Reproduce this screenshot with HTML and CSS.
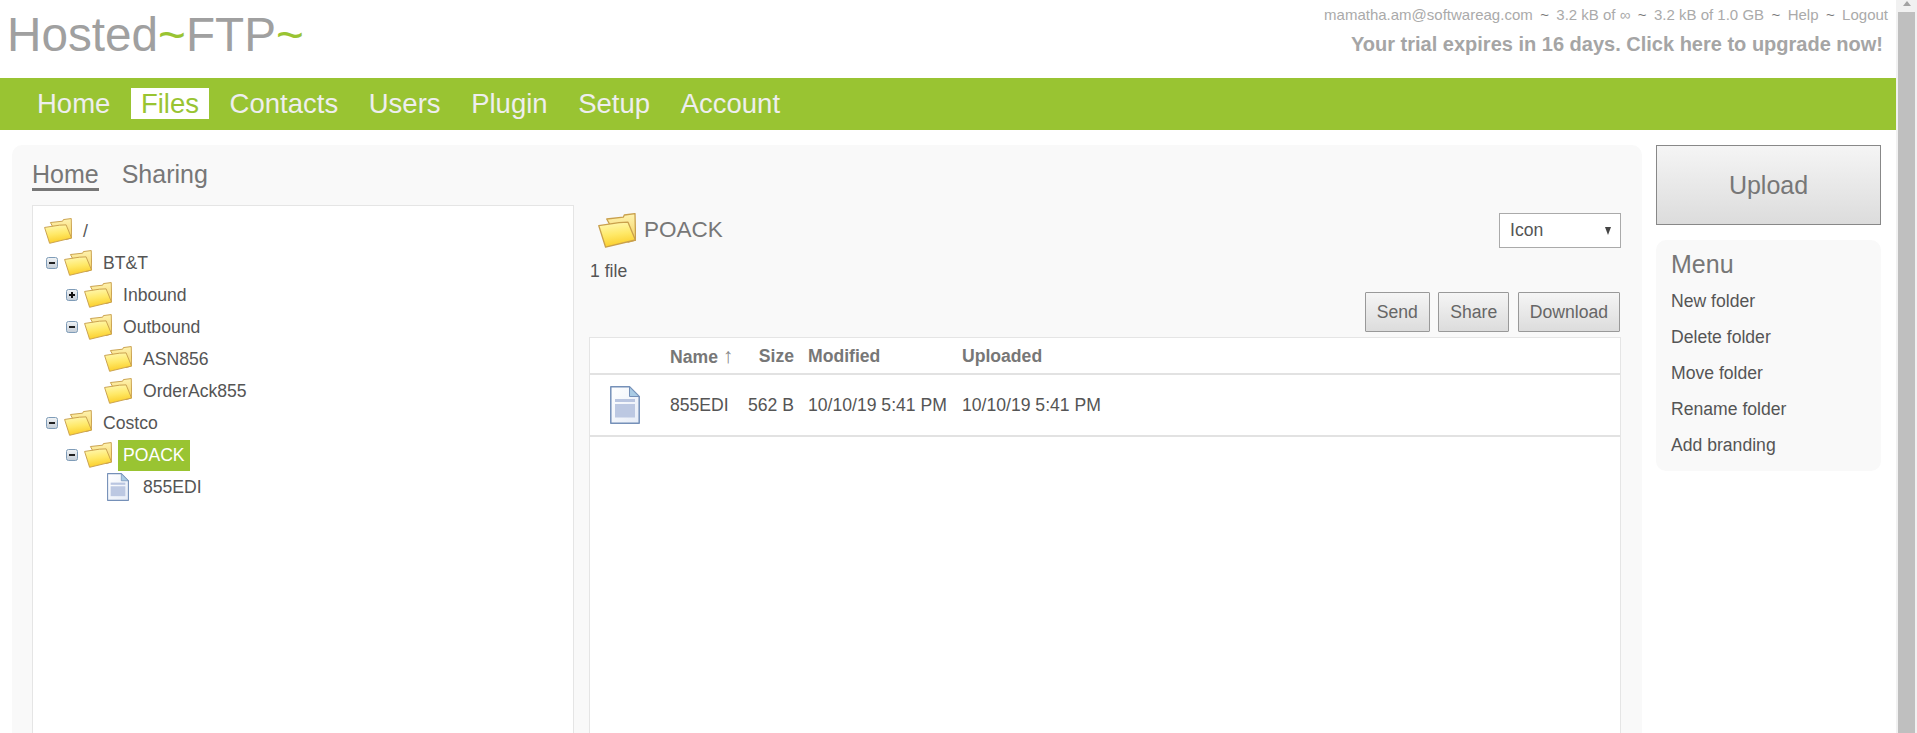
FILE: index.html
```html
<!DOCTYPE html>
<html lang="en">
  <head>
    <meta charset="UTF-8" />
    <meta name="viewport" content="width=device-width, initial-scale=1.0" />
    <title>Hosted~FTP~</title>
    <link rel="stylesheet" href="styles.css">
  </head>
  <body>
    <svg class="sprites" width="0" height="0">
      <defs>
        <linearGradient id="folder-front" x1="0" y1="0" x2="0.2" y2="1">
          <stop offset="0" stop-color="#fff9b8" />
          <stop offset="0.55" stop-color="#ffe968" />
          <stop offset="1" stop-color="#fbcf2c" />
        </linearGradient>
        <linearGradient id="folder-back" x1="0" y1="0" x2="0" y2="1">
          <stop offset="0" stop-color="#fff3b0" />
          <stop offset="1" stop-color="#f2cf5c" />
        </linearGradient>
        <linearGradient id="page-fill" x1="0" y1="0" x2="1" y2="1">
          <stop offset="0" stop-color="#ffffff" />
          <stop offset="1" stop-color="#e6ecf7" />
        </linearGradient>
        <linearGradient id="toggle-fill" x1="0" y1="0" x2="0" y2="1">
          <stop offset="0" stop-color="#f2f4f6" />
          <stop offset="1" stop-color="#c3ccd6" />
        </linearGradient>
        <symbol id="folder" viewBox="0 0 38 35">
          <path d="M8.7 6 25.3 4.2 26.3 2 37 .6 37.6 27 30 29 12 12Z" fill="url(#folder-back)" stroke="#c9a04c" stroke-width="1.3" stroke-linejoin="round" />
          <path d="M.8 12.7 21 9.6 30 9.2 37.4 27 7.6 34.2Z" fill="url(#folder-front)" stroke="#c9a04c" stroke-width="1.3" stroke-linejoin="round" />
        </symbol>
        <symbol id="doc" viewBox="0 0 30 38">
          <path d="M.8.8H19.5L29.2 10.5V37.2H.8Z" fill="url(#page-fill)" stroke="#7590b8" stroke-width="1.5" stroke-linejoin="round" />
          <path d="M19.5.8V10.5H29.2Z" fill="#a9cbe4" stroke="#7590b8" stroke-width="1" stroke-linejoin="round" />
          <rect x="5" y="13" width="20" height="3" fill="#b9c5e0" />
          <rect x="5" y="18" width="20" height="13.5" fill="#bcc8e2" />
        </symbol>
        <symbol id="minus" viewBox="0 0 12 12">
          <rect x=".5" y=".5" width="11" height="11" rx="2" fill="url(#toggle-fill)" stroke="#7f9cb8" />
          <rect x="3" y="5" width="6" height="2" fill="#222" />
        </symbol>
        <symbol id="plus" viewBox="0 0 12 12">
          <rect x=".5" y=".5" width="11" height="11" rx="2" fill="url(#toggle-fill)" stroke="#7f9cb8" />
          <rect x="3" y="5" width="6" height="2" fill="#111" />
          <rect x="5" y="3" width="2" height="6" fill="#111" />
        </symbol>
      </defs>
    </svg>

    <div class="page">
      <header class="top">
        <div class="logo">Hosted<span class="tilde">~</span>FTP<span class="tilde">~</span></div>
        <div class="account">
          <div class="account-line">mamatha.am@softwareag.com <span class="sep">~</span> 3.2 kB of ∞ <span class="sep">~</span> 3.2 kB of 1.0 GB <span class="sep">~</span> Help <span class="sep">~</span> Logout</div>
          <div class="trial">Your trial expires in 16 days. Click here to upgrade now!</div>
        </div>
      </header>

      <nav class="nav">
        <a class="nav-item">Home</a>
        <a class="nav-item active">Files</a>
        <a class="nav-item">Contacts</a>
        <a class="nav-item">Users</a>
        <a class="nav-item">Plugin</a>
        <a class="nav-item">Setup</a>
        <a class="nav-item">Account</a>
      </nav>

      <div class="content">
        <main class="panel">
          <div class="tabs">
            <a class="tab active">Home</a>
            <a class="tab">Sharing</a>
          </div>

          <div class="columns">
            <div class="tree">
              <div class="tree-row depth-0"><svg class="folder"><use href="#folder" /></svg><span class="tree-label">/</span></div>
              <div class="tree-row depth-0"><svg class="toggle"><use href="#minus" /></svg><svg class="folder"><use href="#folder" /></svg><span class="tree-label">BT&amp;T</span></div>
              <div class="tree-row depth-1"><svg class="toggle"><use href="#plus" /></svg><svg class="folder"><use href="#folder" /></svg><span class="tree-label">Inbound</span></div>
              <div class="tree-row depth-1"><svg class="toggle"><use href="#minus" /></svg><svg class="folder"><use href="#folder" /></svg><span class="tree-label">Outbound</span></div>
              <div class="tree-row depth-2"><svg class="folder"><use href="#folder" /></svg><span class="tree-label">ASN856</span></div>
              <div class="tree-row depth-2"><svg class="folder"><use href="#folder" /></svg><span class="tree-label">OrderAck855</span></div>
              <div class="tree-row depth-0"><svg class="toggle"><use href="#minus" /></svg><svg class="folder"><use href="#folder" /></svg><span class="tree-label">Costco</span></div>
              <div class="tree-row depth-1"><svg class="toggle"><use href="#minus" /></svg><svg class="folder"><use href="#folder" /></svg><span class="tree-label selected">POACK</span></div>
              <div class="tree-row depth-2"><svg class="tree-doc"><use href="#doc" /></svg><span class="tree-label">855EDI</span></div>
            </div>

            <div class="files">
              <div class="files-head">
                <svg class="folder-big"><use href="#folder" /></svg>
                <span class="files-title">POACK</span>
                <div class="view-select"><span>Icon</span><i class="caret"></i></div>
              </div>
              <div class="file-count">1 file</div>
              <div class="actions">
                <button class="btn">Send</button>
                <button class="btn">Share</button>
                <button class="btn">Download</button>
              </div>
              <div class="list">
                <table class="file-table">
                  <colgroup>
                    <col class="col-icon" />
                    <col class="col-name" />
                    <col class="col-size" />
                    <col class="col-date" />
                    <col />
                  </colgroup>
                  <thead>
                    <tr>
                      <th></th>
                      <th>Name <span class="sort">↑</span></th>
                      <th class="right">Size</th>
                      <th>Modified</th>
                      <th>Uploaded</th>
                    </tr>
                  </thead>
                  <tbody>
                    <tr>
                      <td class="icon-cell"><svg class="list-doc"><use href="#doc" /></svg></td>
                      <td>855EDI</td>
                      <td class="right">562 B</td>
                      <td>10/10/19 5:41 PM</td>
                      <td>10/10/19 5:41 PM</td>
                    </tr>
                  </tbody>
                </table>
              </div>
            </div>
          </div>
        </main>

        <aside class="side">
          <button class="upload">Upload</button>
          <div class="menu">
            <div class="menu-title">Menu</div>
            <a class="menu-item">New folder</a>
            <a class="menu-item">Delete folder</a>
            <a class="menu-item">Move folder</a>
            <a class="menu-item">Rename folder</a>
            <a class="menu-item">Add branding</a>
          </div>
        </aside>
      </div>
    </div>

    <div class="scrollbar">
      <i class="scroll-up"></i>
      <div class="scroll-thumb"></div>
    </div>
  </body>
</html>
```

FILE: styles.css
```css
html,
body {
  height: 100%;
}

body {
  font-family: "Liberation Sans", Arial, sans-serif;
  font-size: 17.6px;
  margin: 0;
  color: #555;
  background-color: white;
  display: flex;
  overflow: hidden;
}

.sprites {
  position: absolute;
}

.page {
  flex: 1;
  min-width: 0;
  height: 733px;
  overflow: hidden;
  display: flex;
  flex-direction: column;
}

/* header */
.top {
  height: 78px;
  flex: none;
  display: flex;
  justify-content: space-between;
  box-sizing: border-box;
  padding: 0 8px 0 7px;
}

.logo {
  font-size: 47.7px;
  line-height: 69px;
  color: #a0a0a0;
}

.tilde {
  color: #99c432;
}

.account {
  text-align: right;
  color: #aaa;
}

.account-line {
  font-size: 15px;
  line-height: 17px;
  margin-top: 6px;
}

.sep {
  color: #777;
  margin: 0 3.25px;
}

.trial {
  font-size: 20px;
  font-weight: bold;
  line-height: 24px;
  margin-top: 9px;
  margin-right: 5px;
  color: #a5a5a5;
}

/* nav bar */
.nav {
  height: 52px;
  flex: none;
  box-sizing: border-box;
  background-color: #99c432;
  display: flex;
  align-items: center;
  gap: 10.6px;
  padding: 0 0 1px 27px;
}

.nav-item {
  font-size: 27.5px;
  line-height: 31px;
  padding: 0 10px;
  color: #eee;
}

.nav-item.active {
  background-color: white;
  color: #99c432;
}

/* main area */
.content {
  flex: none;
  display: flex;
  gap: 14px;
  padding: 15px 15px 0 12px;
}

.panel {
  flex: 1;
  min-width: 0;
  height: 640px;
  box-sizing: border-box;
  padding: 0 21px 0 20px;
  background-color: #f9f9f9;
  border-radius: 10px;
}

.tabs {
  height: 60px;
  box-sizing: border-box;
  padding-top: 16px;
  display: flex;
  gap: 23px;
}

.tab {
  font-size: 25px;
  line-height: 27px;
  height: 27px;
  color: #777;
}

.tab.active {
  border-bottom: 3px solid #777;
}

.columns {
  display: flex;
  gap: 15px;
}

/* folder tree */
.tree {
  width: 542px;
  height: 560px;
  box-sizing: border-box;
  padding: 9px 0 0 11px;
  background-color: white;
  border: 1px solid #e5e5e5;
}

.tree-row {
  height: 32px;
  display: flex;
  align-items: center;
}

.depth-0 {
  padding-left: 0;
}

.depth-1 {
  padding-left: 20px;
}

.depth-2 {
  padding-left: 60px;
}

.toggle {
  width: 12px;
  height: 12px;
  margin: 0 6px 0 2px;
}

.folder {
  width: 28px;
  height: 26px;
}

.tree-doc {
  width: 22px;
  height: 28px;
  margin: 0 9px 0 3px;
}

.tree-label {
  margin-left: 6px;
  padding: 0 5px;
  line-height: 31px;
}

.tree-doc + .tree-label {
  margin-left: 0;
}

.selected {
  background-color: #99c432;
  color: white;
}

/* file list */
.files {
  flex: 1;
  min-width: 0;
}

.files-head {
  display: flex;
  align-items: center;
  height: 35px;
  margin-top: 8px;
  padding-left: 9px;
}

.folder-big {
  width: 38px;
  height: 35px;
}

.files-title {
  flex: 1;
  font-size: 22.5px;
  margin-left: 8px;
  padding-bottom: 1px;
  color: #777;
}

.view-select {
  width: 122px;
  height: 35px;
  box-sizing: border-box;
  padding: 0 9px 0 10px;
  background-color: white;
  border: 1px solid #aaa;
  display: flex;
  align-items: center;
  justify-content: space-between;
}

.caret {
  border-left: 3.5px solid transparent;
  border-right: 3.5px solid transparent;
  border-top: 8px solid #444;
}

.file-count {
  line-height: 20px;
  margin-top: 13px;
  padding-left: 1px;
}

.actions {
  display: flex;
  justify-content: flex-end;
  gap: 8.5px;
  margin-top: 11px;
  padding-right: 1px;
}

.btn {
  font-family: inherit;
  font-size: 17.6px;
  height: 40px;
  padding: 0 11px;
  color: #666;
  background: linear-gradient(#f5f5f5, #dcdcdc);
  border: 1px solid #999;
  border-radius: 1px;
}

.list {
  height: 400px;
  margin-top: 5px;
  background-color: white;
  border: 1px solid #e5e5e5;
}

.file-table {
  width: 100%;
  table-layout: fixed;
  border-collapse: collapse;
}

.col-icon {
  width: 73px;
}

.col-name {
  width: 74px;
}

.col-size {
  width: 64px;
}

.col-date {
  width: 154px;
}

.file-table th,
.file-table td {
  padding: 0 7px;
  text-align: left;
  white-space: nowrap;
  border-bottom: 2px solid #e2e2e2;
}

.file-table th {
  height: 34px;
  padding-top: 1px;
  color: #777;
}

.file-table td {
  height: 60px;
}

.file-table .right {
  text-align: right;
}

.sort {
  font-size: 21px;
  line-height: 1;
  font-weight: normal;
  color: #888;
}

.file-table .icon-cell {
  padding: 0 0 0 20px;
}

.list-doc {
  display: block;
  width: 30px;
  height: 38px;
}

/* right column */
.side {
  width: 225px;
  flex: none;
}

.upload {
  display: block;
  width: 100%;
  height: 80px;
  font-family: inherit;
  font-size: 25px;
  color: #777;
  background: linear-gradient(#f5f5f5, #dcdcdc);
  border: 1px solid #888;
}

.menu {
  margin-top: 15px;
  height: 231px;
  box-sizing: border-box;
  padding: 9px 15px 0;
  background-color: #f9f9f9;
  border-radius: 10px;
}

.menu-title {
  font-size: 25px;
  line-height: 30px;
  margin-bottom: 4px;
  color: #777;
}

.menu-item {
  display: block;
  line-height: 36px;
}

/* scrollbar */
.scrollbar {
  width: 21px;
  flex: none;
  box-sizing: border-box;
  padding: 0 2px;
  background-color: #f1f1f1;
  height: 733px;
  display: flex;
  flex-direction: column;
  align-items: center;
}

.scroll-up {
  flex: none;
  margin-top: 1px;
  border-left: 4.5px solid transparent;
  border-right: 4.5px solid transparent;
  border-bottom: 5px solid #a3a3a3;
}

.scroll-thumb {
  flex: 1;
  width: 100%;
  margin-top: 6px;
  background-color: #bfbfbf;
}
```
